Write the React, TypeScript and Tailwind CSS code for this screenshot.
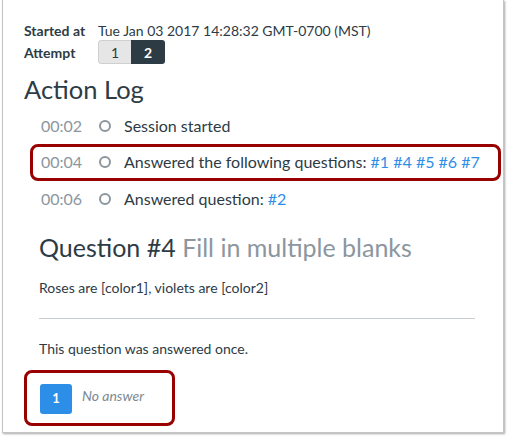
import React from 'react';

const font = { fontFamily: 'Lato, "Open Sans", sans-serif' };

function LogRow({ time, h, children }: { time: string; h: string; children: React.ReactNode }) {
  return (
    <div className={`flex items-center ${h}`}>
      <span className="w-[58px] text-[#8b969e]">{time}</span>
      <span className="w-[12px] h-[12px] rounded-full border-2 border-[#8b969e]" />
      <span className="ml-[13px] text-[#2d3b45]">{children}</span>
    </div>
  );
}

export default function App() {
  return (
    <div className="w-[507px] h-[438px] bg-white overflow-hidden" style={font}>
      <div className="ml-[2px] w-[502px] h-[433px] bg-white border-l border-r border-b border-[#c4c4c4] shadow-[1px_1px_2px_rgba(0,0,0,0.35)] relative">
        <div className="pl-[21px] pt-[19px] text-[#2d3b45]">
          <div className="flex items-center h-[22px] text-[14px]">
            <span className="w-[74px] font-bold">Started at</span>
            <span>Tue Jan 03 2017 14:28:32 GMT-0700 (MST)</span>
          </div>
          <div className="flex items-center h-[24px] text-[14px] mt-[-1px]">
            <span className="w-[74px] font-bold">Attempt</span>
            <div className="flex rounded-[3px] overflow-hidden">
              <span className="w-[33px] h-[24px] flex items-center justify-center bg-[#e6e6e6] border border-[#d0d0d0] border-r-0 rounded-l-[3px]">1</span>
              <span className="w-[34px] h-[24px] flex items-center justify-center bg-[#2d3b45] text-white font-bold">2</span>
            </div>
          </div>
          <h1 className="text-[25.5px] leading-[32px] mt-[9px]">Action Log</h1>
          <div className="mt-[4px] pl-[17px] text-[16px]">
            <LogRow time="00:02" h="h-[34px]">Session started</LogRow>
            <LogRow time="00:04" h="h-[38px]">
              Answered the following questions:{' '}
              <span className="text-[#2d8ee8]">#1 #4 #5 #6 #7</span>
            </LogRow>
            <LogRow time="00:06" h="h-[36px]">
              Answered question: <span className="text-[#2d8ee8]">#2</span>
            </LogRow>
          </div>
          <div className="pl-[15px] pr-[28px]">
            <h2 className="text-[25px] leading-[32px] mt-[14px]">
              Question #4 <span className="text-[#8b969e]">Fill in multiple blanks</span>
            </h2>
            <p className="text-[14px] leading-[20px] mt-[15px]">Roses are [color1], violets are [color2]</p>
            <div className="h-px bg-[#c7cdd1] mt-[20px]" />
            <p className="text-[14px] leading-[20px] mt-[20px]">This question was answered once.</p>
            <div className="flex items-center mt-[25px] h-[30px] pl-[1px]">
              <span className="w-[32px] h-[30px] rounded-[3px] bg-[#2d8ee8] text-white font-bold text-[13px] flex items-center justify-center">1</span>
              <span className="ml-[10px] italic text-[14px] text-[#7d8890] -mt-[8px]">No answer</span>
            </div>
          </div>
        </div>
        {/* callout outlines */}
        <div className="absolute left-[27px] top-[144px] w-[471px] h-[37px] border-[3px] border-[#990000] rounded-[8px]" />
        <div className="absolute left-[21px] top-[370px] w-[151px] h-[56px] border-[3px] border-[#990000] rounded-[8px]" />
      </div>
    </div>
  );
}
